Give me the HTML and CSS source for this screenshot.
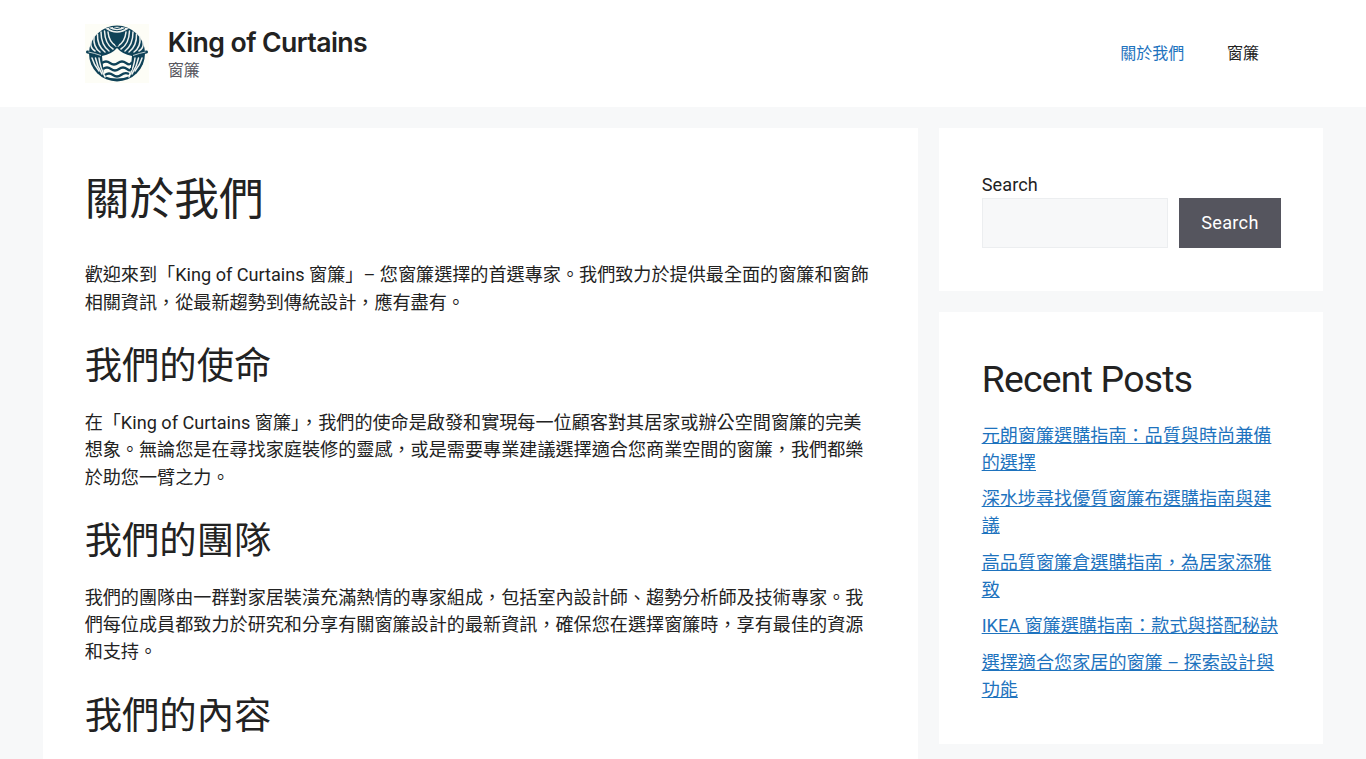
FILE: index.html
```html
<!DOCTYPE html>
<html lang="zh-Hant">
<head>
    <meta charset="UTF-8">
    <meta name="viewport" content="width=device-width, initial-scale=1.0">
    <title>關於我們 - King of Curtains</title>
    <link rel="stylesheet" href="styles.css">
</head>
<body>
    <header class="site-header">
        <div class="branding">
            <a class="logo" href="#" aria-label="King of Curtains">
                <svg viewBox="0 0 64 59" width="64" height="59">
                    <rect width="64" height="59" fill="#fdfdf6"/>
                    <circle cx="32" cy="29.500" r="28" fill="#0f4257"/>
                    <!-- drapes -->
                    <g fill="none" stroke="#eef1ee" stroke-width="1.500" stroke-linecap="round">
                        <path d="M23 8 Q24 18 31 22"/>
                        <path d="M19.500 7 Q20 20 28 25"/>
                        <path d="M16 8 Q16 21 24 27"/>
                        <path d="M12.500 10 Q12 22 20 28"/>
                        <path d="M9 13 Q8 23 15 28"/>
                        <path d="M6 18 Q5 24 10 27"/>
                        <path d="M41 8 Q40 18 33 22"/>
                        <path d="M44.500 7 Q44 20 36 25"/>
                        <path d="M48 8 Q48 21 40 27"/>
                        <path d="M51.500 10 Q52 22 44 28"/>
                        <path d="M55 13 Q56 23 49 28"/>
                        <path d="M58 18 Q59 24 54 27"/>
                        <path d="M7 34 Q9 41 14 47"/>
                        <path d="M10.500 34 Q12 42 17 50"/>
                        <path d="M14 34 Q15 43 20 53"/>
                        <path d="M57 34 Q55 41 50 47"/>
                        <path d="M53.500 34 Q52 42 47 50"/>
                        <path d="M50 34 Q49 43 44 53"/>
                    </g>
                    <!-- valance -->
                    <path d="M20 4.500 Q32 1 44 4.500 Q32 13 20 4.500Z" fill="#eef1ee"/>
                    <path d="M24 4.500 Q32 9 40 4.500 M28 3.500 Q32 5.500 36 3.500" stroke="#0f4257" stroke-width="1" fill="none"/>
                    <!-- tie-back bar -->
                    <path d="M2.500 28 Q9 29 17 32 M61.500 28 Q55 29 47 32" stroke="#0f4257" stroke-width="3" fill="none" stroke-linecap="round"/>
                    <path d="M3.500 28 Q9 29 16 31.500 M60.500 28 Q55 29 48 31.500" stroke="#eef1ee" stroke-width="0.800" fill="none"/>
                    <!-- opening with waves -->
                    <path d="M17 32 Q27 30 32 24 Q37 30 47 32 L45 52 Q32 57 19 52Z" fill="#fdfdf6"/>
                    <circle cx="32" cy="20.500" r="1.800" fill="#0f4257"/>
                    <g fill="none" stroke="#0f4257" stroke-width="2.200">
                        <path d="M17 39 Q21 36 25 39 T33 39 T41 39 T47 38"/>
                        <path d="M18 45 Q22 42 26 45 T34 45 T42 45 T46 44"/>
                        <path d="M20 51 Q24 48 28 51 T36 51 T44 50"/>
                    </g>
                </svg>
            </a>
            <div class="site-text">
                <a class="site-title" href="#">King of Curtains</a>
                <p class="tagline">窗簾</p>
            </div>
        </div>
        <nav class="main-nav">
            <a class="current" href="#">關於我們</a>
            <a href="#">窗簾</a>
        </nav>
    </header>

    <div class="site-content">
        <main class="card page-body">
            <h1>關於我們</h1>
            <p>歡迎來到「King of Curtains 窗簾」– 您窗簾選擇的首選專家。我們致力於提供最全面的窗簾和窗飾相關資訊，從最新趨勢到傳統設計，應有盡有。</p>
            <h2>我們的使命</h2>
            <p>在「King of Curtains 窗簾」，我們的使命是啟發和實現每一位顧客對其居家或辦公空間窗簾的完美想象。無論您是在尋找家庭裝修的靈感，或是需要專業建議選擇適合您商業空間的窗簾，我們都樂於助您一臂之力。</p>
            <h2>我們的團隊</h2>
            <p>我們的團隊由一群對家居裝潢充滿熱情的專家組成，包括室內設計師、趨勢分析師及技術專家。我們每位成員都致力於研究和分享有關窗簾設計的最新資訊，確保您在選擇窗簾時，享有最佳的資源和支持。</p>
            <h2>我們的內容</h2>
        </main>

        <aside class="sidebar">
            <section class="card widget">
                <form class="search-form">
                    <label class="search-label" for="s">Search</label>
                    <div class="search-row">
                        <input class="search-input" id="s" type="search">
                        <button class="search-btn" type="button">Search</button>
                    </div>
                </form>
            </section>
            <section class="card widget">
                <h2>Recent Posts</h2>
                <ul class="post-list">
                    <li><a href="#">元朗窗簾選購指南：品質與時尚兼備的選擇</a></li>
                    <li><a href="#">深水埗尋找優質窗簾布選購指南與建議</a></li>
                    <li><a href="#">高品質窗簾倉選購指南，為居家添雅致</a></li>
                    <li><a href="#">IKEA 窗簾選購指南：款式與搭配秘訣</a></li>
                    <li><a href="#">選擇適合您家居的窗簾 – 探索設計與功能</a></li>
                </ul>
            </section>
        </aside>
    </div>
</body>
</html>
```

FILE: styles.css
```css
html, body {
    height: 100%;
    overflow: hidden;
}
body {
    margin: 0;
    display: flex;
    flex-direction: column;
    background-color: #f7f8f9;
    color: #222222;
    font-family: Roboto, "Noto Sans CJK TC", sans-serif;
    font-size: 18.13px;
    line-height: 27.2px;
}
a {
    color: #1e73be;
}

/* header */
.site-header {
    flex: none;
    height: 106.67px;
    box-sizing: border-box;
    padding: 0 107px 0 85.33px;
    display: flex;
    align-items: center;
    justify-content: space-between;
    background-color: white;
}
.branding {
    display: flex;
    align-items: center;
    gap: 18.5px;
}
.logo {
    display: block;
    height: 59px;
}
.site-text {
    display: flex;
    flex-direction: column;
}
.site-title {
    color: #222222;
    font-family: Inter, sans-serif;
    font-size: 26.67px;
    font-weight: 600;
    letter-spacing: -0.6px;
    line-height: 34px;
    text-decoration: none;
}
.tagline {
    margin: 1px 0 0;
    color: #575760;
    font-size: 16px;
    line-height: 22px;
}
.main-nav {
    display: flex;
    gap: 42.67px;
    font-size: 16px;
}
.main-nav a {
    color: #222222;
    text-decoration: none;
}
.main-nav a.current {
    color: #1e73be;
}

/* page layout */
.site-content {
    flex: 1;
    width: 1280px;
    margin: 21.33px auto 0;
    display: flex;
    gap: 21.33px;
    align-items: stretch;
}
.card {
    background-color: white;
    box-sizing: border-box;
}
.page-body {
    width: 874.67px;
    padding: 44.67px 42.67px 0 41.67px;
}
.page-body h1 {
    margin: 0 0 35px;
    font-size: 44.8px;
    font-weight: 400;
    line-height: 53.76px;
}
.page-body h2, .widget h2 {
    margin: 0 0 20.33px;
    font-size: 37.33px;
    font-weight: 400;
    line-height: 44.8px;
}
.widget h2 {
    margin: 3px 0 19.33px;
    letter-spacing: -0.75px;
}
.page-body p {
    margin: 0 0 28.2px;
}

/* sidebar */
.sidebar {
    width: 384px;
    display: flex;
    flex-direction: column;
    gap: 21.33px;
}
.widget {
    padding: 42.67px;
}
.search-label {
    display: block;
    letter-spacing: 0.1px;
}
.search-row {
    display: flex;
    gap: 10.67px;
}
.search-input {
    flex: none;
    width: 186.67px;
    height: 50px;
    box-sizing: border-box;
    background-color: #f7f8f9;
    border: 1px solid #eceef0;
    padding: 0;
}
.search-btn {
    flex: none;
    width: 102px;
    height: 50px;
    padding: 0;
    background-color: #55555e;
    color: white;
    border: none;
    font-family: inherit;
    font-size: 18.13px;
    letter-spacing: 0.3px;
}
.post-list {
    list-style: none;
    margin: 0 0 -2px;
    padding: 0;
    display: flex;
    flex-direction: column;
    gap: 9.2px;
}
```
